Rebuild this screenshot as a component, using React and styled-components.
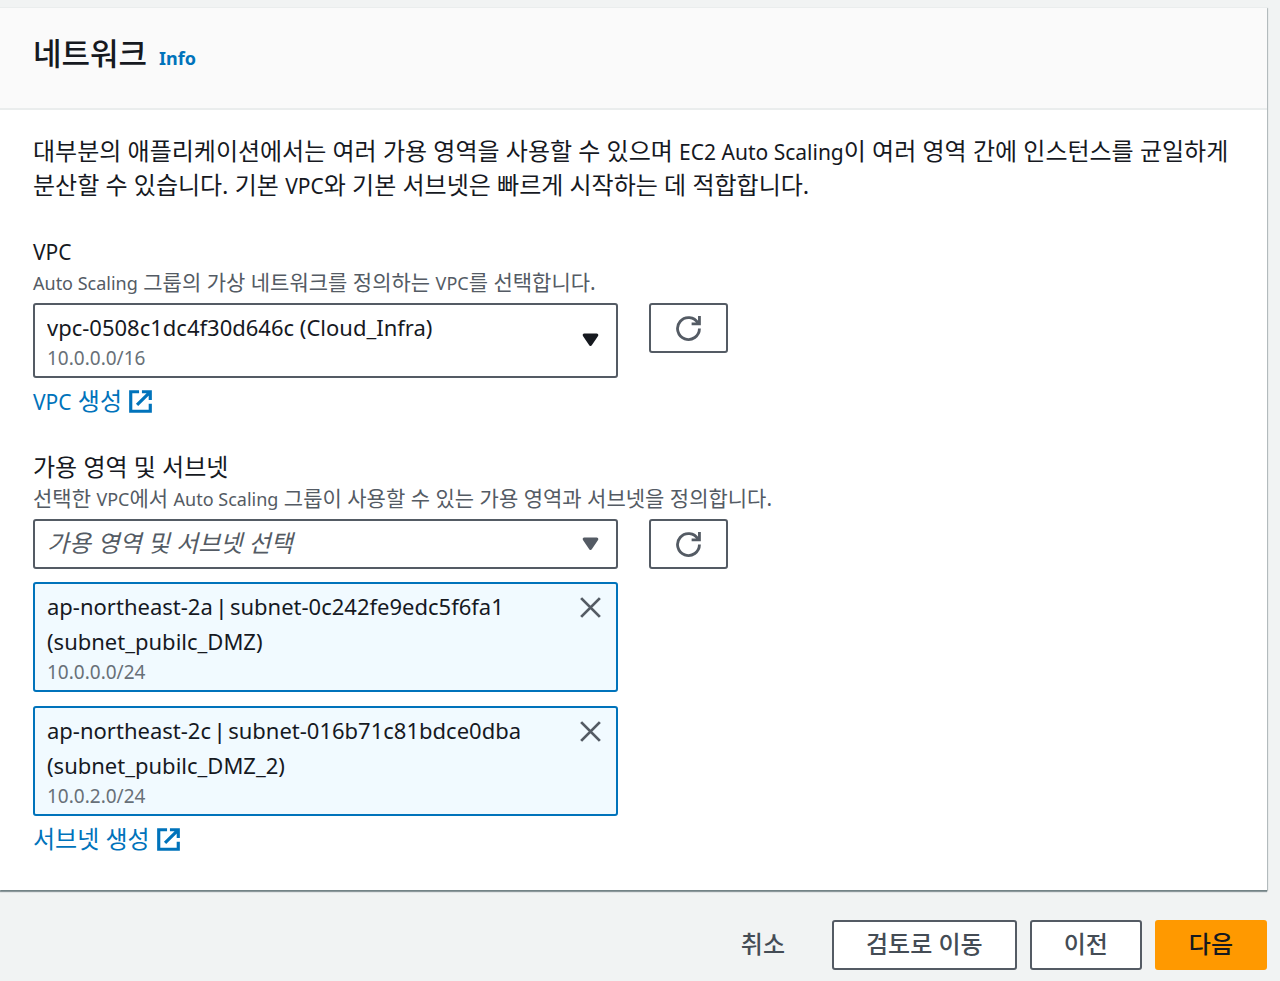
import styled, { createGlobalStyle, css } from 'styled-components'

const subnets = [
  {
    id: 'subnet-0c242fe9edc5f6fa1',
    zone: 'ap-northeast-2a',
    name: 'subnet_pubilc_DMZ',
    cidr: '10.0.0.0/24',
  },
  {
    id: 'subnet-016b71c81bdce0dba',
    zone: 'ap-northeast-2c',
    name: 'subnet_pubilc_DMZ_2',
    cidr: '10.0.2.0/24',
  },
]

function RefreshIcon() {
  return (
    <Icon viewBox="0 0 16 16" aria-hidden="true">
      <path d="M10 5h5V0" />
      <path d="M15 8a7 7 0 1 1-.9-3.4" />
    </Icon>
  )
}

function CloseIcon() {
  return (
    <Icon viewBox="0 0 16 16" aria-hidden="true">
      <path d="m2 2 12 12M14 2 2 14" />
    </Icon>
  )
}

function ExternalIcon() {
  return (
    <Icon $small viewBox="0 0 16 16" aria-hidden="true">
      <path d="M7 1.2H1.2v13.6h13.6V9.5" />
      <path d="M9 1.2h5.8V7M14.6 1.4 5.6 10.4" />
    </Icon>
  )
}

function Dropdown({ id, value, description, placeholder }) {
  return (
    <SelectBox>
      <Select id={id} $tall={!!description} $placeholder={placeholder} defaultValue={value}>
        <option value={value}>{value}</option>
      </Select>
      {description && <SelectNote>{description}</SelectNote>}
      <Caret viewBox="0 0 16 16" $muted={placeholder} aria-hidden="true">
        <path d="M4 4.5h8l-4 6z" />
      </Caret>
    </SelectBox>
  )
}

export default function App() {
  return (
    <>
      <GlobalStyle />
      <Page>
        <Card>
          <CardHeader>
            <Title>네트워크</Title>
            <InfoLink href="#info">Info</InfoLink>
          </CardHeader>
          <CardBody>
            <Intro>
              대부분의 애플리케이션에서는 여러 가용 영역을 사용할 수 있으며 <Latin>EC2 Auto Scaling</Latin>이 여러
              영역 간에 인스턴스를 균일하게 분산할 수 있습니다. 기본 <Latin>VPC</Latin>와 기본 서브넷은 빠르게
              시작하는 데 적합합니다.
            </Intro>

            <Field>
              <Label htmlFor="vpc">
                <Latin>VPC</Latin>
              </Label>
              <Hint>
                <SmallLatin>Auto Scaling</SmallLatin> 그룹의 가상 네트워크를 정의하는 <SmallLatin>VPC</SmallLatin>를
                선택합니다.
              </Hint>
              <Control>
                <Dropdown id="vpc" value="vpc-0508c1dc4f30d646c (Cloud_Infra)" description="10.0.0.0/16" />
                <RefreshButton type="button" aria-label="VPC 새로 고침">
                  <RefreshIcon />
                </RefreshButton>
              </Control>
              <CreateLink href="#create-vpc">
                <span>
                  <Latin>VPC</Latin> 생성
                </span>
                <ExternalIcon />
              </CreateLink>
            </Field>

            <Field>
              <Label htmlFor="subnets">가용 영역 및 서브넷</Label>
              <Hint>
                선택한 <SmallLatin>VPC</SmallLatin>에서 <SmallLatin>Auto Scaling</SmallLatin> 그룹이 사용할 수 있는
                가용 영역과 서브넷을 정의합니다.
              </Hint>
              <Control>
                <Dropdown id="subnets" value="가용 영역 및 서브넷 선택" placeholder />
                <RefreshButton type="button" aria-label="서브넷 새로 고침">
                  <RefreshIcon />
                </RefreshButton>
              </Control>
              <TokenList>
                {subnets.map((subnet) => (
                  <Token key={subnet.id}>
                    <TokenText>
                      <TokenName>
                        {subnet.zone} <Divider>|</Divider> {subnet.id} ({subnet.name})
                      </TokenName>
                      <TokenCidr>{subnet.cidr}</TokenCidr>
                    </TokenText>
                    <RemoveButton type="button" aria-label={`${subnet.name} 제거`}>
                      <CloseIcon />
                    </RemoveButton>
                  </Token>
                ))}
              </TokenList>
              <CreateLink href="#create-subnet">
                <span>서브넷 생성</span>
                <ExternalIcon />
              </CreateLink>
            </Field>
          </CardBody>
        </Card>

        <Actions>
          <Button type="button" $variant="link">
            취소
          </Button>
          <Button type="button">검토로 이동</Button>
          <Button type="button">이전</Button>
          <Button type="button" $variant="primary">
            다음
          </Button>
        </Actions>
      </Page>
    </>
  )
}

const GlobalStyle = createGlobalStyle`
  * {
    box-sizing: border-box;
  }

  body {
    margin: 0;
    background: #f1f3f3;
    color: #16191f;
    font-family: 'Noto Sans', 'Noto Sans CJK KR', sans-serif;
    font-size: 24px;
    line-height: 34px;
  }

  button,
  select {
    font-family: inherit;
  }
`

const Page = styled.main`
  padding: 7px 13px 10px 0;
`

const Card = styled.section`
  background: #fff;
  border-top: 1px solid #eaeded;
  box-shadow:
    0 2px 1px rgba(0, 28, 36, 0.4),
    1px 1px 1px rgba(0, 28, 36, 0.2);
`

const CardHeader = styled.header`
  display: flex;
  align-items: baseline;
  gap: 12px;
  padding: 24px 33px 33px;
  background: #fafafa;
  border-bottom: 2px solid #eaeded;
`

const Title = styled.h2`
  margin: 0;
  font-size: 31px;
  font-weight: 500;
  line-height: 43px;
`

const InfoLink = styled.a`
  color: #0073bb;
  font-size: 18px;
  font-weight: 700;
  text-decoration: none;
`

const CardBody = styled.div`
  display: flex;
  flex-direction: column;
  gap: 32px;
  padding: 24px 32px 34px 33px;
`

const Intro = styled.p`
  margin: 0;
  word-break: keep-all;
`

const Latin = styled.span`
  font-size: 21px;
  line-height: 1;
`

const SmallLatin = styled.span`
  font-size: 18px;
  line-height: 1;
`

const Field = styled.div`
  display: flex;
  flex-direction: column;
  align-items: flex-start;
`

const Label = styled.label`
  line-height: 34px;
`

const Hint = styled.p`
  margin: 0 0 7px;
  color: #545b64;
  font-size: 21px;
  line-height: 28px;
`

const Control = styled.div`
  display: grid;
  grid-template-columns: minmax(0, 585px) 79px;
  align-items: start;
  gap: 31px;
  width: 100%;
`

const SelectBox = styled.div`
  display: grid;
  grid-template-columns: 1fr auto;
  grid-template-rows: 1fr auto;
`

const Select = styled.select`
  grid-area: 1 / 1 / 3 / 3;
  width: 100%;
  height: ${({ $tall }) => ($tall ? 75 : 50)}px;
  padding: ${({ $tall }) => ($tall ? '4px 48px 32px 12px' : '0 48px 2px 12px')};
  appearance: none;
  background: #fff;
  border: 2px solid #545b64;
  border-radius: 3px;
  color: ${({ $placeholder }) => ($placeholder ? '#545b64' : '#16191f')};
  font-size: ${({ $placeholder }) => ($placeholder ? 24 : 22)}px;
  font-style: ${({ $placeholder }) => ($placeholder ? 'italic' : 'normal')};
  line-height: 34px;
`

const SelectNote = styled.span`
  grid-area: 2 / 1;
  padding: 0 0 7px 14px;
  color: #687078;
  font-size: 19px;
  line-height: 26px;
  pointer-events: none;
`

const Icon = styled.svg`
  display: block;
  flex: none;
  width: ${({ $small }) => ($small ? 23 : 25)}px;
  height: ${({ $small }) => ($small ? 23 : 25)}px;
  fill: none;
  stroke: currentColor;
  stroke-width: ${({ $small }) => ($small ? 2.2 : 1.8)};
`

const Caret = styled.svg`
  grid-area: 1 / 2 / 3 / 3;
  align-self: center;
  width: 25px;
  height: 25px;
  margin-right: 15px;
  fill: ${({ $muted }) => ($muted ? '#545b64' : '#16191f')};
  stroke: ${({ $muted }) => ($muted ? '#545b64' : '#16191f')};
  stroke-width: 2;
  stroke-linejoin: round;
  pointer-events: none;
`

const RefreshButton = styled.button`
  display: flex;
  align-items: center;
  justify-content: center;
  height: 50px;
  padding: 0;
  background: #fff;
  border: 2px solid #545b64;
  border-radius: 3px;
  color: #545b64;
`

const CreateLink = styled.a`
  display: flex;
  align-items: center;
  gap: 7px;
  margin-top: 6px;
  color: #0073bb;
  text-decoration: none;
`

const TokenList = styled.ul`
  display: flex;
  flex-direction: column;
  gap: 14px;
  width: 100%;
  max-width: 585px;
  margin: 13px 0 0;
  padding: 0;
  list-style: none;
`

const Token = styled.li`
  display: flex;
  align-items: flex-start;
  justify-content: space-between;
  padding: 5px 13px 5px 12px;
  background: #f1faff;
  border: 2px solid #0073bb;
  border-radius: 3px;
`

const TokenText = styled.div`
  display: flex;
  flex-direction: column;
  max-width: 500px;
`

const TokenName = styled.span`
  font-size: 22px;
  line-height: 35px;
`

const Divider = styled.span`
  font-family: 'Liberation Sans', sans-serif;
  line-height: 1;
`

const TokenCidr = styled.span`
  color: #687078;
  font-size: 19px;
  line-height: 26px;
`

const RemoveButton = styled.button`
  padding: 6px 0;
  background: none;
  border: 0;
  color: #545b64;
`

const Actions = styled.footer`
  display: flex;
  justify-content: flex-end;
  gap: 13px;
  padding-top: 30px;
`

const Button = styled.button`
  height: 50px;
  padding: 0 32px 2px;
  background: #fff;
  border: 2px solid #545b64;
  border-radius: 3px;
  color: #444c55;
  font-size: 24px;
  font-weight: 500;
  line-height: 34px;

  ${({ $variant }) =>
    $variant === 'link' &&
    css`
      background: transparent;
      border-color: transparent;
    `}

  ${({ $variant }) =>
    $variant === 'primary' &&
    css`
      background: #ff9900;
      border-color: #ff9900;
      color: #16191f;
    `}
`
